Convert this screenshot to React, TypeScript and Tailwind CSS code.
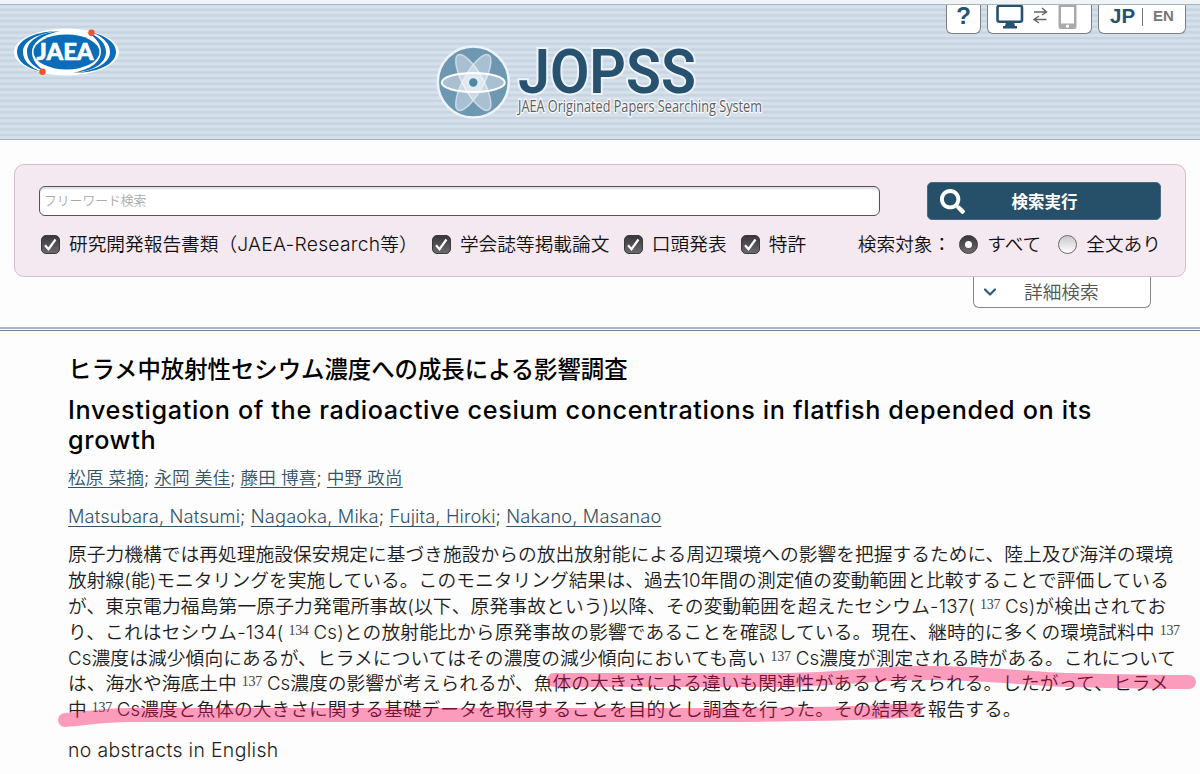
import React from 'react';
import { FaSearch } from 'react-icons/fa';
import { ChevronDown } from 'lucide-react';

const papers = [
  { label: <>研究開発報告書類（<span className="text-[19.300px] tracking-[0.250px]">JAEA-Research</span>等）</>, width: 'w-[391px]' },
  { label: '学会誌等掲載論文', width: 'w-[192px]' },
  { label: '口頭発表', width: 'w-[117px]' },
  { label: '特許', width: 'w-[119px]' },
];

const authorsJa = ['松原 菜摘', '永岡 美佳', '藤田 博喜', '中野 政尚'];
const authorsEn = ['Matsubara, Natsumi', 'Nagaoka, Mika', 'Fujita, Hiroki', 'Nakano, Masanao'];

// "^137" marks a mass number that is set as a superscript
const abstractLines = [
  { text: '原子力機構では再処理施設保安規定に基づき施設からの放出放射能による周辺環境への影響を把握するために、陸上及び海洋の環境', tracking: 'tracking-[0.03px]' },
  { text: '放射線(能)モニタリングを実施している。このモニタリング結果は、過去10年間の測定値の変動範囲と比較することで評価している', tracking: 'tracking-[0.06px]' },
  { text: 'が、東京電力福島第一原子力発電所事故(以下、原発事故という)以降、その変動範囲を超えたセシウム-137(^137Cs)が検出されてお', tracking: 'tracking-[0.15px]' },
  { text: 'り、これはセシウム-134(^134Cs)との放射能比から原発事故の影響であることを確認している。現在、継時的に多くの環境試料中^137', tracking: 'tracking-[0.16px]' },
  { text: 'Cs濃度は減少傾向にあるが、ヒラメについてはその濃度の減少傾向においても高い^137Cs濃度が測定される時がある。これについて', tracking: 'tracking-[0.1px]' },
  { text: 'は、海水や海底土中^137Cs濃度の影響が考えられるが、魚体の大きさによる違いも関連性があると考えられる。したがって、ヒラメ', tracking: 'tracking-[0.04px]' },
  { text: '中^137Cs濃度と魚体の大きさに関する基礎データを取得することを目的とし調査を行った。その結果を報告する。', tracking: 'tracking-[0.03px]' },
];

const JaeaLogo: React.FC = () => (
  <svg className="h-[50px] w-[106px]" viewBox="0 0 106 50">
    <ellipse cx="52.500" cy="25" rx="52.500" ry="23.500" fill="#fff" />
    {/* orbit arcs: thick at the sides, fading out towards the top right and bottom left */}
    <g fill="#0b6cb8">
      <path d="M43 4C18 5 3 14 3 25C3 34 12 41 28 45C15 40 9 33 9 25C9 15 21 7 43 4Z" />
      <path d="M46 4C25 6 13 14 13 25C13 34 20 41 33 45C23 40 18 33 18 25C18 16 27 8 46 4Z" />
      <path d="M62 46C87 45 102 36 102 25C102 16 93 9 77 5C90 10 96 17 96 25C96 35 84 43 62 46Z" />
      <path d="M59 46C80 44 92 36 92 25C92 16 85 9 72 5C82 10 87 17 87 25C87 34 78 42 59 46Z" />
    </g>
    <ellipse cx="52.500" cy="25" rx="33" ry="17.500" fill="#0b6cb8" />
    <circle cx="77.500" cy="5.800" r="3.200" fill="#f0542b" />
    <circle cx="28.500" cy="44.800" r="3.200" fill="#f0542b" />
    <text x="22.500" y="32.500" fontFamily="Lato, sans-serif" fontWeight="900" fontSize="23" fill="#fff" stroke="#fff" strokeWidth="0.600" textLength="57" lengthAdjust="spacingAndGlyphs">JAEA</text>
  </svg>
);

const JopssLogo: React.FC = () => (
  <svg className="h-[84px] w-[340px] overflow-visible" viewBox="0 0 340 84">
    <circle cx="38.300" cy="42" r="35.500" fill="#6e97b2" stroke="#edf3f8" strokeWidth="2.500" />
    <g fill="#fff" fillOpacity="0.400" stroke="#e3edf4" strokeOpacity="0.700" strokeWidth="1.500">
      <ellipse cx="38.300" cy="42.500" rx="31.500" ry="10" transform="rotate(61 38.300 42.500)" />
      <ellipse cx="38.300" cy="42.500" rx="31.500" ry="10" transform="rotate(-61 38.300 42.500)" />
    </g>
    <ellipse cx="38.300" cy="42.500" rx="31.500" ry="9.500" fill="#fff" fillOpacity="0.400" stroke="#fff" strokeWidth="2" />
    <circle cx="38.300" cy="42.500" r="7" fill="#e3ecf2" />
    <circle cx="38.300" cy="42.500" r="4.200" fill="#5286a6" />
    <text x="83" y="53" fontFamily="Roboto, sans-serif" fontWeight="600" fontSize="61" fill="#265270" stroke="#edf3f8" strokeWidth="4" paintOrder="stroke" textLength="178" lengthAdjust="spacingAndGlyphs">JOPSS</text>
    <text x="83" y="72" fontFamily="'Open Sans', sans-serif" fontWeight="400" fontSize="16.500" fill="#625e5e" stroke="#f2f6fa" strokeWidth="3" paintOrder="stroke" textLength="244" lengthAdjust="spacingAndGlyphs">JAEA Originated Papers Searching System</text>
  </svg>
);

const CheckBox: React.FC = () => (
  <svg className="h-[19px] w-[19px] shrink-0" viewBox="0 0 19 19">
    <defs>
      <linearGradient id="box" x1="0" y1="0" x2="0" y2="1">
        <stop offset="0" stopColor="#38363a" />
        <stop offset="1" stopColor="#6d6b6e" />
      </linearGradient>
    </defs>
    <rect x="0.500" y="0.500" width="18" height="18" rx="4.500" fill="url(#box)" stroke="#3b393c" />
    <path d="M4 10.200L7.500 14.200L14.500 4.500" fill="none" stroke="#fff" strokeWidth="2.200" />
  </svg>
);

const Radio: React.FC<{ checked?: boolean }> = ({ checked }) => (
  <span
    className={`flex h-[19px] w-[19px] shrink-0 items-center justify-center rounded-full border ${
      checked ? 'border-[#3b393c] bg-linear-to-b from-[#38363a] to-[#6d6b6e]' : 'border-[#6b686b] bg-linear-to-b from-[#c9c8ca] to-white'
    }`}
  >
    {checked && <span className="h-[7px] w-[7px] rounded-full bg-white" />}
  </span>
);

const AbstractLine: React.FC<{ text: string; tracking: string }> = ({ text, tracking }) => (
  <div className={`h-[25.900px] whitespace-nowrap ${tracking}`}>
    {text.split(/(\^\d{3})/).map((part, index) =>
      part.startsWith('^') ? (
        <span key={index} className="relative -top-[4px] mx-[5px] font-['Liberation_Serif',serif] text-[14px] font-normal tracking-[-0.300px] text-[#444]">
          {part.slice(1)}
        </span>
      ) : (
        part
      )
    )}
  </div>
);

const Authors: React.FC<{ names: string[]; className: string }> = ({ names, className }) => (
  <p className={`whitespace-nowrap text-[#333] ${className}`}>
    {names.map((name, index) => (
      <React.Fragment key={name}>
        {index > 0 && '; '}
        <a className="text-[#34536a] underline decoration-1 underline-offset-[3px] [text-decoration-skip-ink:none]">{name}</a>
      </React.Fragment>
    ))}
  </p>
);

const Header: React.FC = () => (
  <header className="relative h-[140px] border-b border-[#a3b3c3] bg-[repeating-linear-gradient(#d5e0eb_0px,#d5e0eb_2.200px,#c7d4e2_3.200px,#c7d4e2_4.800px,#d5e0eb_5.700px)]">
    <div className="h-[5px] border-b border-[#a9b5c1] bg-[#f1f4f7]" />
    <div className="absolute top-[27px] left-[14px]">
      <JaeaLogo />
    </div>
    <div className="absolute top-[40px] left-[435px]">
      <JopssLogo />
    </div>
    <div className="absolute top-[5px] right-[14px] flex h-[29px] gap-[6px] font-['Liberation_Sans',sans-serif] text-[#265270]">
      <div className="flex w-[35px] justify-center rounded-b-md border border-t-0 border-[#7d8082] bg-white text-[24px] leading-[22px] font-bold">?</div>
      <div className="rounded-b-md border border-t-0 border-[#7d8082] bg-white">
        <svg className="h-[28px] w-[103px]" viewBox="0 0 103 28">
          <rect x="9.500" y="0.800" width="24.500" height="16" rx="2" fill="none" stroke="#265270" strokeWidth="2.600" />
          <path d="M18 17.500H26L27 21H29V23.500H15V21H17Z" fill="#265270" />
          <path d="M46 7H58M54 3L58.500 7L54 10M58.500 14.500H46.500M51 11L46 14.500L51 18" fill="none" stroke="#666" strokeWidth="1.500" />
          <rect x="70.500" y="-1" width="18" height="25" rx="2.500" fill="#aaa" />
          <rect x="73" y="2" width="13" height="16.500" fill="#fff" />
          <circle cx="79.500" cy="21.200" r="1.600" fill="#fff" />
        </svg>
      </div>
      <div className="flex w-[88px] items-center rounded-b-md border border-t-0 border-[#7d8082] bg-white pb-[5px] pl-[11px]">
        <span className="text-[20.500px] font-bold">JP</span>
        <span className="ml-[7px] h-[18px] w-px bg-[#777]" />
        <span className="ml-[10px] text-[15px] font-bold text-[#777]">EN</span>
      </div>
    </div>
  </header>
);

const SearchPanel: React.FC = () => (
  <section className="mx-[14px] mt-[24px] h-[113px] rounded-[10px] border border-[#d3bdd0] bg-[#f4e9f1] px-[24px] pt-[17px]">
    <div className="flex items-center justify-between">
      <div className="flex h-[30px] w-[841px] items-center rounded-[6px] border-[1.500px] border-[#555158] bg-white pl-[4px] text-[12.800px] text-[#aaa] shadow-[inset_0_2px_2px_#ddd]">
        フリーワード検索
      </div>
      <button className="flex h-[38px] w-[234px] items-center rounded-[5px] border border-[#4b6a80] bg-[#265069] text-white">
        <FaSearch className="ml-[12px] h-[25px] w-[25px]" />
        <span className="mt-[2px] ml-[46.500px] text-[16.500px] font-bold">検索実行</span>
      </button>
    </div>
    <div className="mt-[10px] flex h-[30px] items-center whitespace-nowrap text-[18.700px] text-[#111]">
      {papers.map((paper, index) => (
        <label key={index} className={`flex items-center gap-[9px] pl-[2px] ${paper.width}`}>
          <CheckBox />
          <span>{paper.label}</span>
        </label>
      ))}
      <span className="w-[101.500px]">検索対象：</span>
      <label className="flex w-[99px] items-center gap-[9px]">
        <Radio checked />
        すべて
      </label>
      <label className="flex items-center gap-[9px]">
        <Radio />
        全文あり
      </label>
    </div>
  </section>
);

export default function App() {
  return (
    <div className="relative h-[774px] w-[1200px] overflow-hidden bg-[#fdfdfd] font-[Inter,'Noto_Sans_CJK_JP',sans-serif] font-[350]">
      <Header />
      <SearchPanel />
      <div className="mr-[49px] ml-auto flex h-[31px] w-[178px] items-center rounded-b-[6px] border border-t-0 border-[#85888a] bg-white text-[18.700px] text-[#555]">
        <ChevronDown className="ml-[6px] h-[20px] w-[20px] text-[#265e80]" strokeWidth={2.600} />
        <span className="mt-[2px] ml-[24px]">詳細検索</span>
      </div>
      <div className="mt-[19px] h-[4px] border-t-2 border-b border-t-[#a9b8c4] border-b-[#6f879b]" />

      <main className="pl-[68px] text-black">
        <h1 className="mt-[21px] text-[23.390px] leading-[36px] font-medium whitespace-nowrap">ヒラメ中放射性セシウム濃度への成長による影響調査</h1>
        <h2 className="mt-[8px] text-[25.200px] leading-[29.500px] font-medium tracking-[0.650px] whitespace-nowrap">
          Investigation of the radioactive cesium concentrations in flatfish depended on its
          <br />
          growth
        </h2>
        <Authors names={authorsJa} className="mt-[8px] text-[17.600px] leading-[30px] tracking-[0.120px]" />
        <Authors names={authorsEn} className="mt-[8px] text-[18.300px] leading-[30px] tracking-[0.130px]" />
        <div className="mt-[11px] text-[18.730px] leading-[25.900px] text-[#1c1c1c]">
          {abstractLines.map(line => (
            <AbstractLine key={line.text} text={line.text} tracking={line.tracking} />
          ))}
        </div>
        <p className="mt-[12px] text-[19.400px] leading-[30px] tracking-[0.350px] text-[#1c1c1c]">no abstracts in English</p>
      </main>

      {/* marker strokes drawn over the last two lines */}
      <svg className="pointer-events-none absolute inset-0 h-[774px] w-[1200px]" viewBox="0 0 1200 774">
        <g fill="none" stroke="#f70a5a" strokeOpacity="0.400" strokeWidth="14" strokeLinecap="round" strokeLinejoin="round">
          <path d="M554 680H780C840 680 870 673 925 673C990 673 1030 679 1070 680C1110 681 1150 682 1189 682" />
          <path d="M65 720C85 719 100 715 130 715H640C740 715 850 715 915 710" />
        </g>
      </svg>
    </div>
  );
}
